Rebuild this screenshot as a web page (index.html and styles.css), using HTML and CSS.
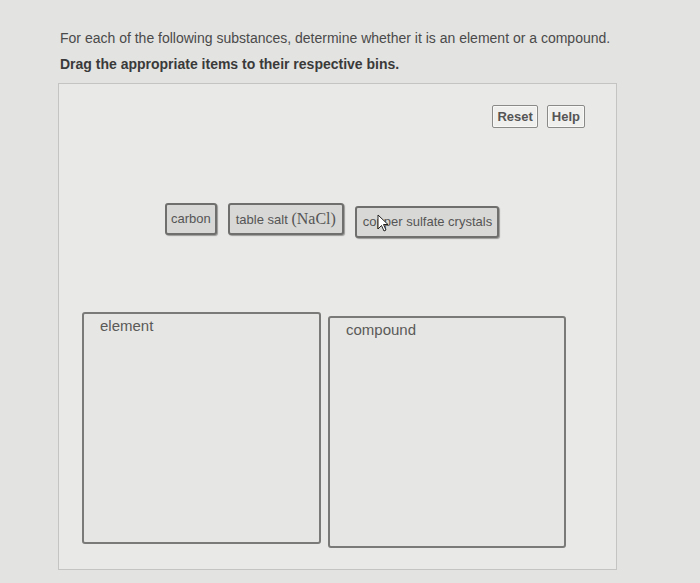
FILE: index.html
```
<!DOCTYPE html>
<html>
<head>
<meta charset="utf-8">
<link rel="stylesheet" href="styles.css">
</head>
<body>
<div class="page">
  <p class="intro">For each of the following substances, determine whether it is an element or a compound.</p>
  <p class="task">Drag the appropriate items to their respective bins.</p>
  <div class="panel">
    <div class="toolbar">
      <button class="btn">Reset</button>
      <button class="btn">Help</button>
    </div>
    <div class="items">
      <div class="item item-carbon">carbon</div>
      <div class="item item-salt">table salt <span class="formula">(NaCl)</span></div>
      <div class="item item-low">copper sulfate crystals
        <svg class="cursor" width="12" height="18" viewBox="0 0 12 18"><path d="M1 1 L1 15 L4.5 11.5 L7 17 L9 16 L6.5 10.5 L11 10.5 Z" fill="#fff" stroke="#222" stroke-width="1"/></svg>
      </div>
    </div>
    <div class="bins">
      <div class="bin"><span class="bin-label">element</span></div>
      <div class="bin bin-low"><span class="bin-label">compound</span></div>
    </div>
  </div>
</div>
</body>
</html>
```
FILE: styles.css
```
html, body {
  margin: 0;
  padding: 0;
}
body {
  background: #e3e3e1;
  font-family: "Liberation Sans", Arial, sans-serif;
  width: 700px;
  height: 583px;
  overflow: hidden;
}
.page {
  padding: 29px 0 0 60px;
}
.intro {
  margin: 0;
  font-size: 14px;
  color: #4a4a4a;
  line-height: 18px;
}
.task {
  margin: 8px 0 0 0;
  font-size: 14px;
  font-weight: bold;
  color: #3a3a3a;
  line-height: 18px;
}
.panel {
  margin: 10px 0 0 -2px;
  width: 557px;
  height: 485px;
  border: 1px solid #c4c4c2;
  background: #e9e9e7;
  box-sizing: content-box;
}
.toolbar {
  display: flex;
  justify-content: flex-end;
  gap: 9px;
  padding: 21px 31px 0 0;
}
.btn {
  font-family: "Liberation Sans", Arial, sans-serif;
  font-size: 13px;
  font-weight: bold;
  color: #555;
  background: #efefed;
  border: 1px solid #8a8a88;
  border-radius: 2px;
  height: 23px;
  padding: 0 4px;
  box-shadow: inset 0 0 0 1px #f8f8f6;
}
.items {
  display: flex;
  align-items: flex-start;
  gap: 11px;
  padding: 75px 0 0 106px;
}
.item {
  position: relative;
  background: #d8d8d6;
  border: 2px solid #6f6f6d;
  border-radius: 3px;
  font-size: 13px;
  color: #555;
  height: 28px;
  line-height: 28px;
  padding: 0 5px;
  box-shadow: 1px 1px 1px #9a9a98;
}
.item-carbon {
  padding: 0 4px;
}
.item-salt {
  padding: 0 6px;
}
.item-low {
  margin-top: 3px;
  padding: 0 5px 0 6px;
}
.formula {
  font-family: "Liberation Serif", "Times New Roman", serif;
  font-size: 16px;
  color: #555;
}
.cursor {
  position: absolute;
  left: 20px;
  top: 6px;
}
.bins {
  display: flex;
  align-items: flex-start;
  gap: 7px;
  padding: 74px 0 0 23px;
}
.bin {
  width: 235px;
  height: 228px;
  border: 2px solid #7a7a78;
  border-radius: 3px;
  background: #e6e6e4;
  padding: 0;
}
.bin-low {
  margin-top: 4px;
  width: 234px;
}
.bin-label {
  display: block;
  font-size: 15px;
  color: #5a5a58;
  padding: 3px 0 0 16px;
}
```
